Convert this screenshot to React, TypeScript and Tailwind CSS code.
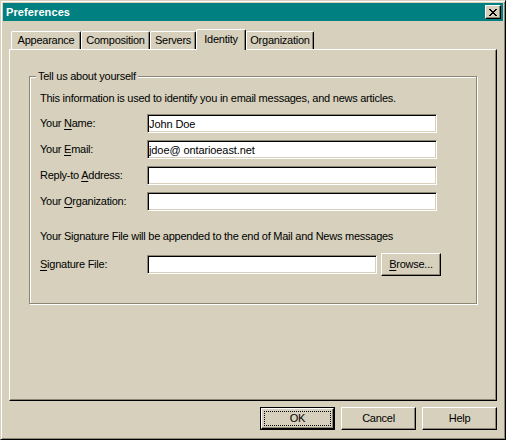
import type { ReactNode } from 'react'

// classic Win2000 "Preferences" dialog, Identity tab

const TABS = [
  { label: 'Appearance', width: 'w-[70px]' },
  { label: 'Composition', width: 'w-[69px]' },
  { label: 'Servers', width: 'w-[46px]' },
  { label: 'Identity', width: 'w-[50px]', active: true },
  { label: 'Organization', width: 'w-[68px]' },
]

function U({ children }: { children: ReactNode }) {
  return <span className="underline underline-offset-[2px] decoration-1">{children}</span>
}

function CloseButton() {
  return (
    <div className="w-[16px] h-[14px] flex items-center justify-center bg-[#d6d0bc] border border-t-white border-l-white border-r-black border-b-black shadow-[inset_-1px_-1px_#8c8674]">
      <svg width="8" height="7" viewBox="0 0 8 7" shapeRendering="crispEdges">
        <path
          fill="#000"
          d="M0 0h2v1H0zM6 0h2v1H6zM1 1h2v1H1zM5 1h2v1H5zM2 2h4v1H2zM3 3h2v1H3zM2 4h4v1H2zM1 5h2v1H1zM5 5h2v1H5zM0 6h2v1H0zM6 6h2v1H6z"
        />
      </svg>
    </div>
  )
}

function Field({ value, width = 'w-[290px]' }: { value?: string; width?: string }) {
  return (
    <input
      type="text"
      defaultValue={value}
      className={`${width} h-[19px] bg-white text-black text-[11px] tracking-[-0.1px] px-[1px] outline-none border border-t-[#8c8674] border-l-[#8c8674] border-r-white border-b-white shadow-[inset_1px_1px_#000,inset_-1px_-1px_#d6d0bc]`}
    />
  )
}

function Row({ label, value }: { label: ReactNode; value?: string }) {
  return (
    <div className="flex items-center h-[19px]">
      <span className="w-[107px]">{label}</span>
      <Field value={value} />
    </div>
  )
}

function Button({ children, primary }: { children: ReactNode; primary?: boolean }) {
  if (primary) {
    return (
      <div className="w-[75px] h-[23px] border border-black flex">
        <div className="flex-1 flex p-[2px] border border-t-white border-l-white border-r-black border-b-black shadow-[inset_-1px_-1px_#8c8674]">
          <span className="flex-1 flex items-center justify-center border border-dotted border-black">{children}</span>
        </div>
      </div>
    )
  }
  return (
    <div className="w-[75px] h-[23px] flex items-center justify-center border border-t-white border-l-white border-r-black border-b-black shadow-[inset_-1px_-1px_#8c8674]">
      {children}
    </div>
  )
}

export default function App() {
  return (
    <div className="w-[506px] h-[440px] bg-[#d6d0bc] p-[2px] flex flex-col text-[11px] leading-[13px] tracking-[-0.25px] text-black font-['Liberation_Sans',Arial,sans-serif] border border-t-[#d6d0bc] border-l-[#d6d0bc] border-r-black border-b-black shadow-[inset_1px_1px_#fff,inset_-1px_-1px_#8c8674]">
      <div className="h-[18px] bg-[#008080] flex items-center justify-between pl-[3px] pr-[2px]">
        <span className="text-white font-bold tracking-[0.1px]">Preferences</span>
        <CloseButton />
      </div>

      <div className="flex flex-col px-[6px] pt-[8px]">
        <div className="flex items-end ml-[2px] h-[20px]">
          {TABS.map(t =>
            t.active ? (
              <div
                key={t.label}
                className={`${t.width} h-[21px] -mb-px relative z-10 bg-[#d6d0bc] flex items-center justify-center pb-[2px] rounded-t-[2px] border-t border-l border-r border-t-white border-l-white border-r-black shadow-[inset_-1px_0_#8c8674]`}
              >
                {t.label}
              </div>
            ) : (
              <div
                key={t.label}
                className={`${t.width} h-[18px] flex items-center justify-center rounded-t-[2px] border-t border-l border-r border-t-white border-l-white border-r-black shadow-[inset_-1px_0_#8c8674]`}
              >
                {t.label}
              </div>
            )
          )}
        </div>

        <div className="h-[352px] px-[19px] pt-[20px] border border-t-white border-l-white border-r-black border-b-black shadow-[inset_-1px_-1px_#8c8674]">
          <fieldset className="h-[234px] border border-[#8c8674] shadow-[inset_1px_1px_#fff,1px_1px_#fff]">
            <legend className="ml-[6px] px-[2px] bg-[#d6d0bc]">Tell us about yourself</legend>
            <div className="pl-[10px] pt-[9px]">
              <div>This information is used to identify you in email messages, and news articles.</div>
              <div className="flex flex-col gap-[7px] mt-[9px]">
                <Row label={<>Your <U>N</U>ame:</>} value="John Doe" />
                <Row label={<>Your <U>E</U>mail:</>} value="jdoe@ ontarioeast.net" />
                <Row label={<>Reply-to <U>A</U>ddress:</>} />
                <Row label={<>Your <U>O</U>rganization:</>} />
              </div>
              <div className="mt-[19px]">Your Signature File will be appended to the end of Mail and News messages</div>
              <div className="flex items-center h-[23px] mt-[10px]">
                <span className="w-[107px]"><U>S</U>ignature File:</span>
                <Field width="w-[230px]" />
                <div className="ml-[4px] w-[60px] h-[23px] flex items-center justify-center border border-t-white border-l-white border-r-black border-b-black shadow-[inset_-1px_-1px_#8c8674]">
                  <span><U>B</U>rowse...</span>
                </div>
              </div>
            </div>
          </fieldset>
        </div>

        <div className="flex justify-end gap-[6px] mt-[6px]">
          <Button primary>OK</Button>
          <Button>Cancel</Button>
          <Button>Help</Button>
        </div>
      </div>
    </div>
  )
}
